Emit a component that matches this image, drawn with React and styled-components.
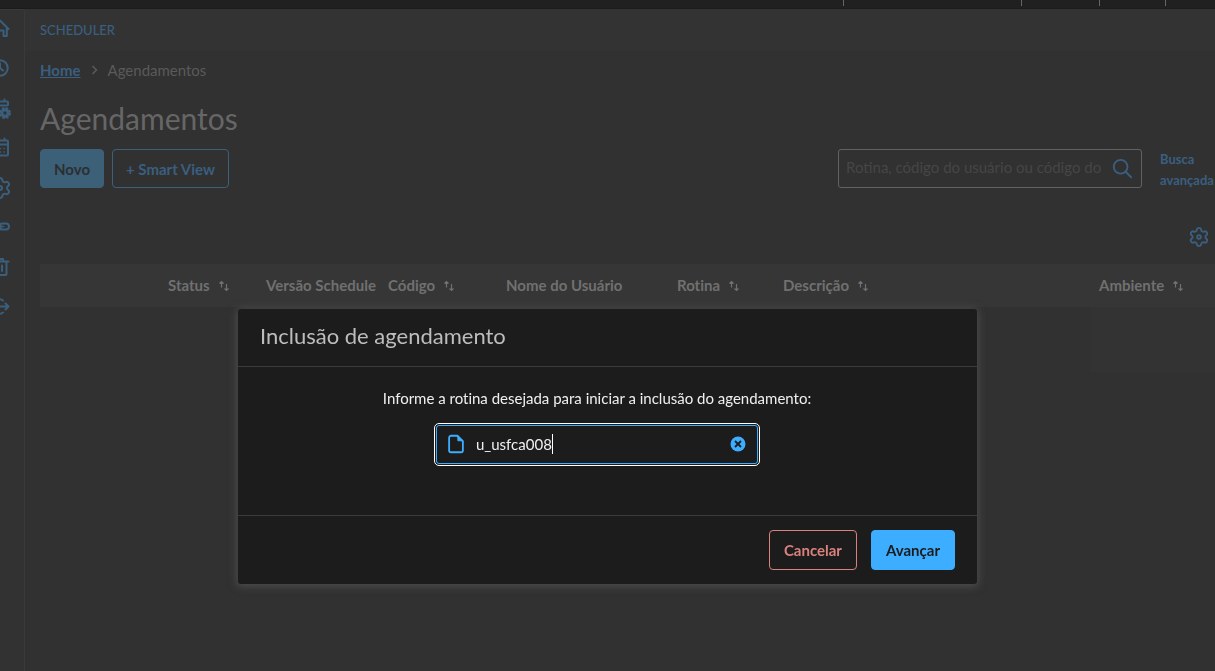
import React, { useState } from "react";
import styled, { createGlobalStyle } from "styled-components";

const GlobalStyle = createGlobalStyle`
  * {
    box-sizing: border-box;
  }

  body {
    margin: 0;
    background: #313131;
    color: #6b6b6b;
    font-family: Lato, "Open Sans", sans-serif;
    font-size: 15px;
    font-variant-ligatures: none;
    overflow: hidden;
  }

  button,
  input {
    font-family: inherit;
  }
`;

const Page = styled.div`
  min-height: 100vh;
  display: flex;
  flex-direction: column;
`;

const TopBar = styled.div`
  height: 9px;
  display: flex;
  justify-content: flex-end;
  background: #202020;
  border-bottom: 1px solid #1b1b1b;
`;

const TopBarSlot = styled.div`
  width: ${(props) => props.$width}px;
  height: 6px;
  border-left: 1px solid #666;
`;

const Shell = styled.div`
  flex: 1;
  display: flex;
`;

/* Collapsed menu, its icons are half hidden by the left edge */
const Sidebar = styled.nav`
  width: 25px;
  padding: 6px 12px 0 0;
  display: flex;
  flex-direction: column;
  align-items: flex-end;
  gap: 16px;
  overflow: hidden;
  background: #323232;
  border: 1px solid #3a3a3a;
  border-left: 0;
  border-bottom: 0;
  border-top-right-radius: 3px;
`;

const SidebarLink = styled.a`
  width: 24px;
  height: 24px;
  flex: none;
  color: #3a5f7d;

  svg {
    display: block;
  }
`;

const Main = styled.main`
  flex: 1;
  min-width: 0;
`;

const AppHeader = styled.header`
  height: 42px;
  padding: 0 15px;
  display: flex;
  align-items: center;
  background: #333;
  color: #3a5f80;
  font-size: 13px;
  font-weight: 500;
`;

const Content = styled.div`
  padding: 8px 0 0 15px;
`;

const Breadcrumb = styled.div`
  display: flex;
  align-items: center;
  gap: 9px;
  line-height: 22px;
  color: #5a5a5a;
`;

const BreadcrumbLink = styled.a`
  color: #3a5f80;
  font-weight: 700;
`;

const Title = styled.h1`
  margin: 15px 0 8px;
  font-size: 30px;
  font-weight: 400;
  line-height: 45px;
  color: #666;
`;

const Actions = styled.div`
  display: flex;
  align-items: flex-start;
  gap: 8px;
`;

const Button = styled.button`
  height: ${(props) => (props.$large ? 40 : 39)}px;
  padding: 0 ${(props) => (props.$large ? 14 : 13)}px;
  border: 1px solid ${(props) => props.$line};
  border-radius: 4px;
  background: ${(props) => props.$fill || "transparent"};
  color: ${(props) => props.$color};
  font-size: 15px;
  font-weight: 700;
  cursor: pointer;
`;

const SearchBox = styled.label`
  width: 304px;
  height: 39px;
  margin-left: auto;
  padding: 0 8px 0 7px;
  display: flex;
  align-items: center;
  gap: 10px;
  border: 1px solid #626262;
  border-radius: 3px;
  color: #3a5f80;
`;

const SearchInput = styled.input`
  flex: 1;
  min-width: 0;
  padding: 0 0 3px;
  border: 0;
  outline: 0;
  background: transparent;
  color: #777;
  font-size: 15px;

  &::placeholder {
    color: #464646;
    opacity: 1;
  }
`;

const AdvancedLink = styled.a`
  width: 55px;
  margin-left: 10px;
  color: #3a5f80;
  font-size: 13px;
  font-weight: 700;
  line-height: 21px;
  text-decoration: none;
`;

const TableTools = styled.div`
  padding: 35px 5px 16px 0;
  display: flex;
  justify-content: flex-end;
`;

const IconButton = styled.button`
  padding: 0;
  display: flex;
  border: 0;
  background: transparent;
  color: ${(props) => props.$color};
  cursor: pointer;
`;

const Table = styled.table`
  width: 100%;
  table-layout: fixed;
  border-collapse: collapse;
`;

const HeaderCell = styled.th`
  width: ${(props) => (props.$width ? `${props.$width}px` : "auto")};
  height: 43px;
  padding: 0 0 2px 8px;
  background: #363636;
  color: #707070;
  font-size: 15px;
  font-weight: 700;
  text-align: left;
  white-space: nowrap;

  svg {
    margin-left: 8px;
    vertical-align: -1px;
  }
`;

const Cell = styled.td`
  height: 65px;
  padding: 0;
  background: ${(props) => (props.$pinned ? "#333" : "transparent")};
`;

const Backdrop = styled.div`
  position: fixed;
  inset: 0;
  padding-top: 309px;
  display: flex;
  justify-content: center;
  align-items: flex-start;
`;

const Modal = styled.section`
  width: 739px;
  max-width: 100%;
  border-radius: 3px;
  background: #1c1c1c;
  box-shadow: 0 1px 8px 1px #505050;
`;

const ModalTitle = styled.h2`
  margin: 0;
  padding: 0 22px 3px;
  border-bottom: 1px solid #3b3b3b;
  color: #bdbdbd;
  font-size: 22px;
  font-weight: 400;
  line-height: 54px;
`;

const ModalBody = styled.div`
  padding: 20px 21px 51px 0;
  display: flex;
  flex-direction: column;
  align-items: center;
  gap: 16px;
`;

const FieldLabel = styled.label`
  color: #efefef;
  font-size: 15px;
  line-height: 22px;
`;

const Field = styled.div`
  width: 322px;
  height: 39px;
  padding: 0 11px 2px 8px;
  display: flex;
  align-items: center;
  border: 1px solid #3dadff;
  border-radius: 3px;
  outline: 1px solid #fff;
  outline-offset: 1px;
  color: #3dadff;
`;

const FieldInput = styled.input`
  field-sizing: content;
  margin-left: 9px;
  padding: 0;
  border: 0;
  outline: 0;
  background: transparent;
  color: #efefef;
  font-size: 15px;
`;

const Caret = styled.span`
  width: 1px;
  height: 20px;
  margin-right: auto;
  background: #fff;
`;

const ModalFooter = styled.footer`
  padding: 14px 22px;
  display: flex;
  justify-content: flex-end;
  gap: 14px;
  border-top: 1px solid #3b3b3b;
`;

const Icon = ({ size = 24, stroke = 2, children }) => (
    <svg
        width={size}
        height={size}
        viewBox="0 0 24 24"
        fill="none"
        stroke="currentColor"
        strokeWidth={stroke}
        strokeLinecap="round"
        strokeLinejoin="round"
        aria-hidden="true"
    >
        {children}
    </svg>
);

const Gear = () => (
    <>
        <path d="M9.671 4.136a2.34 2.34 0 0 1 4.659 0 2.34 2.34 0 0 0 3.319 1.915 2.34 2.34 0 0 1 2.33 4.033 2.34 2.34 0 0 0 0 3.831 2.34 2.34 0 0 1-2.33 4.033 2.34 2.34 0 0 0-3.319 1.915 2.34 2.34 0 0 1-4.659 0 2.34 2.34 0 0 0-3.32-1.915 2.34 2.34 0 0 1-2.33-4.033 2.34 2.34 0 0 0 0-3.831A2.34 2.34 0 0 1 6.35 6.051a2.34 2.34 0 0 0 3.319-1.915" />
        <circle cx="12" cy="12" r="2" />
    </>
);

const SortIcon = () => (
    <svg width="12" height="12" viewBox="0 0 12 12" fill="none" stroke="currentColor" strokeWidth="1.2" aria-hidden="true">
        <path d="M3.5 7.5v-6M1.5 3.5l2-2 2 2M8.5 4v6.5M6.5 8.5l2 2 2-2" />
    </svg>
);

const menu = [
    { label: "Início", icon: <path d="m3.5 13 8.5-8.5 8.5 8.5M5.2 12v8h3.300v-5.500h7V20h3.300v-8" /> },
    { label: "Histórico", icon: <><circle cx="12" cy="12" r="7.7" /><path d="M12 7.5V12l3 2.5" /></> },
    {
        label: "Agenda",
        icon: (
            <>
                <path d="M20 9V6.500a1 1 0 0 0-1-1H5a1 1 0 0 0-1 1v13a1 1 0 0 0 1 1h4M4 9.500h15M7.500 5V3.500M16.500 5V3.500" />
                <circle cx="17" cy="17" r="3.2" strokeWidth="3" />
                <circle cx="17" cy="17" r="5" strokeWidth="2" strokeDasharray="2.600 1.327" strokeLinecap="butt" />
            </>
        ),
    },
    {
        label: "Calendário",
        icon: (
            <>
                <path d="M5 4.500h14a1 1 0 0 1 1 1v13a1 1 0 0 1-1 1H5a1 1 0 0 1-1-1v-13a1 1 0 0 1 1-1zM4 8.500h16M7.500 4V2.500M16.500 4V2.500" />
                <path strokeWidth="1.5" d="M9 12.500h.1M12.500 12.500h.1M16 12.500h.1M9 16h.1M12.500 16h.1M16 16h.1" />
            </>
        ),
    },
    { label: "Configurações", icon: <Gear /> },
    {
        label: "Vínculos",
        icon: (
            <>
                <rect x="3" y="7.5" width="9.5" height="6" rx="3" />
                <rect x="11.500" y="7.5" width="9.5" height="6" rx="3" />
                <path strokeWidth="1.5" d="M8.500 10.500h7" />
            </>
        ),
    },
    { label: "Lixeira", icon: <path d="M3.5 5.500h17M9 5.500V3h6v2.500M5.500 5.500V18a1 1 0 0 0 1 1h11a1 1 0 0 0 1-1V5.500M10 9.500V15M14 9.500V15" /> },
    { label: "Sair", icon: <path d="M9 10.500h11.500M17.500 7.500l3 3-3 3M15 4.500a7.200 7.200 0 1 0 0 12" /> },
];

const columns = [
    { width: 120 },
    { label: "Status", width: 98, sortable: true },
    { label: "Versão Schedule", width: 122 },
    { label: "Código", width: 118, sortable: true },
    { label: "Nome do Usuário", width: 171 },
    { label: "Rotina", width: 106, sortable: true },
    { label: "Descrição", sortable: true },
    { label: "Ambiente", width: 124, sortable: true },
];

const App = () => {
    const [search, setSearch] = useState("");
    const [routine, setRoutine] = useState("u_usfca008");

    return (
        <Page>
            <GlobalStyle />
            <TopBar>
                {[178, 78, 66, 50].map((width) => (
                    <TopBarSlot key={width} $width={width} />
                ))}
            </TopBar>

            <Shell>
                <Sidebar>
                    {menu.map((item) => (
                        <SidebarLink key={item.label} href="#" aria-label={item.label}>
                            <Icon>{item.icon}</Icon>
                        </SidebarLink>
                    ))}
                </Sidebar>

                <Main>
                    <AppHeader>SCHEDULER</AppHeader>
                    <Content>
                        <Breadcrumb>
                            <BreadcrumbLink href="#">Home</BreadcrumbLink>
                            <svg width="9" height="12" viewBox="0 0 9 12" fill="none" stroke="currentColor" strokeWidth="1.5">
                                <path d="m2.5 2 4 4-4 4" />
                            </svg>
                            <span>Agendamentos</span>
                        </Breadcrumb>
                        <Title>Agendamentos</Title>

                        <Actions>
                            <Button $line="#3c6078" $fill="#3c6078" $color="#2b2f31">Novo</Button>
                            <Button $line="#3c6078" $color="#3a5f80">+ Smart View</Button>
                            <SearchBox>
                                <SearchInput
                                    aria-label="Pesquisar"
                                    placeholder="Rotina, código do usuário ou código do agendamento"
                                    value={search}
                                    onChange={(event) => setSearch(event.target.value)}
                                />
                                <Icon size={22}>
                                    <circle cx="10.5" cy="9.5" r="7.5" />
                                    <path d="m16 15 6 6" />
                                </Icon>
                            </SearchBox>
                            <AdvancedLink href="#">Busca avançada</AdvancedLink>
                        </Actions>

                        <TableTools>
                            <IconButton $color="#3a5f80" aria-label="Gerenciar colunas">
                                <Icon size={22}><Gear /></Icon>
                            </IconButton>
                        </TableTools>

                        <Table>
                            <thead>
                                <tr>
                                    {columns.map((column, index) => (
                                        <HeaderCell key={index} $width={column.width}>
                                            {column.label}
                                            {column.sortable && <SortIcon />}
                                        </HeaderCell>
                                    ))}
                                </tr>
                            </thead>
                            <tbody>
                                <tr>
                                    {columns.map((column, index) => (
                                        <Cell key={index} $pinned={index === columns.length - 1} />
                                    ))}
                                </tr>
                            </tbody>
                        </Table>
                    </Content>
                </Main>
            </Shell>

            <Backdrop>
                <Modal role="dialog" aria-labelledby="modal-title">
                    <ModalTitle id="modal-title">Inclusão de agendamento</ModalTitle>
                    <ModalBody>
                        <FieldLabel htmlFor="routine">
                            Informe a rotina desejada para iniciar a inclusão do agendamento:
                        </FieldLabel>
                        <Field>
                            <Icon size={22}>
                                <path d="M13.5 3H6.500a2 2 0 0 0-2 2v14a2 2 0 0 0 2 2h11a2 2 0 0 0 2-2V9z" />
                                <path d="M14 3.500v5h5z" fill="currentColor" strokeWidth="1" />
                            </Icon>
                            <FieldInput
                                id="routine"
                                value={routine}
                                onChange={(event) => setRoutine(event.target.value)}
                            />
                            <Caret />
                            <IconButton $color="#3dadff" aria-label="Limpar" onClick={() => setRoutine("")}>
                                <svg width="16" height="16" viewBox="0 0 16 16">
                                    <circle cx="8" cy="8" r="7.5" fill="currentColor" />
                                    <path d="m5 5 6 6M11 5l-6 6" stroke="#1c1c1c" strokeWidth="1.8" />
                                </svg>
                            </IconButton>
                        </Field>
                    </ModalBody>
                    <ModalFooter>
                        <Button $large $line="#d9827d" $color="#d9827d">Cancelar</Button>
                        <Button $large $line="#3dadff" $fill="#3dadff" $color="#1c1c1c">Avançar</Button>
                    </ModalFooter>
                </Modal>
            </Backdrop>
        </Page>
    );
};

export default App;
